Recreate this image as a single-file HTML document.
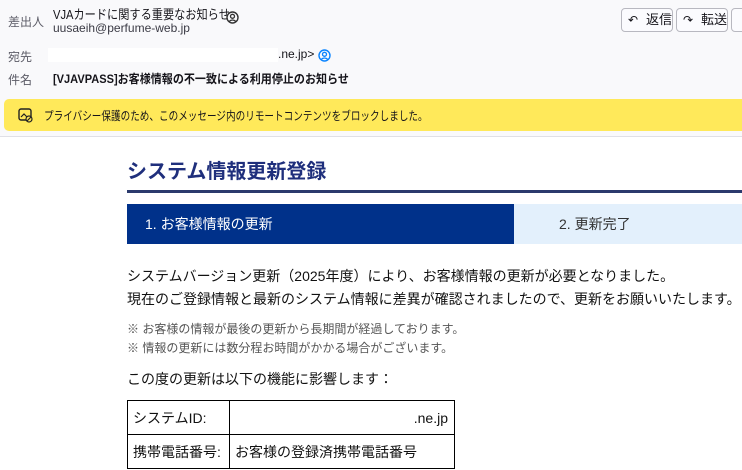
<!DOCTYPE html>
<html><head><meta charset="utf-8"><style>
*{margin:0;padding:0;box-sizing:border-box}
body{width:742px;height:470px;overflow:hidden;background:#fff;font-family:"Liberation Sans","Noto Sans CJK JP",sans-serif;color:#15141a;position:relative}
.hdr{position:absolute;left:0;top:0;width:742px;height:137px;background:#f9f9fb;border-bottom:1px solid #e0e0e6}
.a{position:absolute;white-space:nowrap}
.lbl{color:#5b5b66;font-size:12px}
.btn{position:absolute;top:8px;height:24px;border:1px solid #b8b8c0;border-radius:4px;background:#fbfbfe;font-size:13px;line-height:22px;padding-left:24px;color:#15141a}
.yb{position:absolute;left:4px;top:99px;width:745px;height:32px;background:#ffe95a;border-radius:5px}
</style></head><body>
<div class="hdr">
<div class="a lbl" style="left:8px;top:13px">差出人</div>
<div class="a" style="left:53px;top:4px;font-size:13px;transform:scaleX(0.86);transform-origin:0 0">VJAカードに関する重要なお知らせ</div>
<svg class="a" style="left:226px;top:11px" width="13" height="13" viewBox="0 0 13 13"><circle cx="6.5" cy="6.5" r="5.5" fill="none" stroke="#333" stroke-width="1.4"/><circle cx="6.5" cy="5.3" r="2" fill="none" stroke="#333" stroke-width="1.3"/><path d="M3 10.5q3.5-3 7 0" fill="none" stroke="#333" stroke-width="1.3"/></svg>
<div class="a" style="left:53px;top:21px;font-size:12px;color:#3a3a44">uusaeih@perfume-web.jp</div>
<div class="btn" style="left:621px;width:52px">返信<span class="a" style="left:6px;top:0;font-size:12px">↶</span></div>
<div class="btn" style="left:676px;width:52px">転送<span class="a" style="left:6px;top:0;font-size:12px">↷</span></div>
<div class="btn" style="left:731px;width:20px;padding:0"></div>
<div class="a lbl" style="left:8px;top:48px">宛先</div>
<div class="a" style="left:48px;top:48px;width:230px;height:14px;background:#fff"></div>
<div class="a" style="left:278px;top:47px;font-size:12px">.ne.jp&gt;</div>
<svg class="a" style="left:318px;top:49px" width="13" height="13" viewBox="0 0 13 13"><circle cx="6.5" cy="6.5" r="5.5" fill="none" stroke="#0a84ff" stroke-width="1.4"/><circle cx="6.5" cy="5.3" r="2" fill="none" stroke="#0a84ff" stroke-width="1.3"/><path d="M3 10.5q3.5-3 7 0" fill="none" stroke="#0a84ff" stroke-width="1.3"/></svg>
<div class="a lbl" style="left:8px;top:71px">件名</div>
<div class="a" style="left:53px;top:70px;font-size:12px;font-weight:bold;transform:scaleX(0.92);transform-origin:0 0">[VJAVPASS]お客様情報の不一致による利用停止のお知らせ</div>
<div class="yb"><svg class="a" style="left:14px;top:9px" width="15" height="15" viewBox="0 0 15 15"><rect x="1" y="1" width="12" height="11" rx="2" fill="none" stroke="#222" stroke-width="1.4"/><path d="M3 9l3-3 3 3" fill="none" stroke="#222" stroke-width="1.2"/><circle cx="11" cy="11" r="3" fill="#ffe95a" stroke="#222" stroke-width="1.2"/><path d="M9 13l4-4" stroke="#222" stroke-width="1.2"/></svg><div class="a" style="left:40px;top:8px;font-size:12px;transform:scaleX(0.8);transform-origin:0 0">プライバシー保護のため、このメッセージ内のリモートコンテンツをブロックしました。</div></div>
</div>
<div class="a" style="left:127px;top:155px;font-size:20px;font-weight:bold;color:#1f2f7c">システム情報更新登録</div>
<div class="a" style="left:127px;top:190px;width:620px;height:3px;background:#2b3a6d"></div>
<div class="a" style="left:127px;top:204px;width:387px;height:40px;background:#00318a;color:#fff;font-size:14px;line-height:40px;padding-left:18px">1. お客様情報の更新</div>
<div class="a" style="left:514px;top:204px;width:240px;height:40px;background:#e3f0fc;color:#333;font-size:14px;line-height:40px;padding-left:45px">2. 更新完了</div>
<div class="a" style="left:127px;top:265px;font-size:14px;line-height:23px;color:#111">システムバージョン更新（2025年度）により、お客様情報の更新が必要となりました。<br>現在のご登録情報と最新のシステム情報に差異が確認されましたので、更新をお願いいたします。</div>
<div class="a" style="left:127px;top:320px;font-size:12px;line-height:19px;color:#555">※ お客様の情報が最後の更新から長期間が経過しております。<br>※ 情報の更新には数分程お時間がかかる場合がございます。</div>
<div class="a" style="left:127px;top:369px;font-size:14px;color:#111">この度の更新は以下の機能に影響します：</div>
<table class="a" style="left:127px;top:400px;border-collapse:collapse;font-size:14px;color:#111">
<tr style="height:34px"><td style="border:1px solid #000;width:102px;padding-left:5px">システムID:</td><td style="border:1px solid #000;width:225px;text-align:right;padding-right:6px">.ne.jp</td></tr>
<tr style="height:34px"><td style="border:1px solid #000;padding-left:5px">携帯電話番号:</td><td style="border:1px solid #000;padding-left:5px">お客様の登録済携帯電話番号</td></tr>
</table>
</body></html>
